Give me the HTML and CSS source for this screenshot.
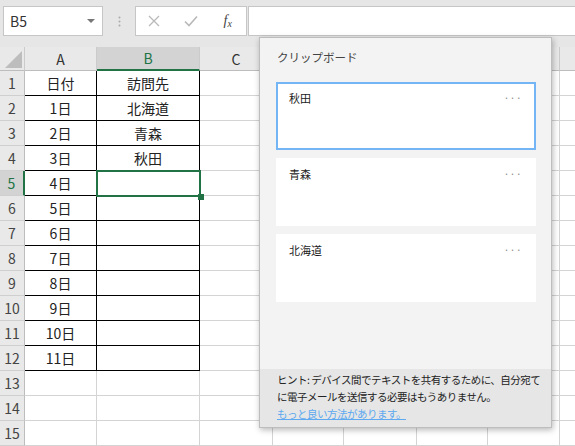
FILE: index.html
```html
<!DOCTYPE html>
<html lang="ja">
<head>
    <meta charset="UTF-8">
    <title>クリップボード</title>
    <link rel="stylesheet" href="styles.css">
</head>
<body>
<div class="app">
    <div class="topbar">
        <div class="namebox">B5<span class="caret"></span></div>
        <div class="grip">
            <svg width="3" height="11" viewBox="0 0 3 11"><circle cx="1.5" cy="1.5" r="1" fill="#aaa"/><circle cx="1.5" cy="5.5" r="1" fill="#aaa"/><circle cx="1.5" cy="9.5" r="1" fill="#aaa"/></svg>
        </div>
        <div class="fxbtns">
            <span class="btn"><svg width="12" height="12" viewBox="0 0 12 12"><path d="M1 1L11 11M11 1L1 11" stroke="#b9b9b9" stroke-width="1.3" fill="none"/></svg></span>
            <span class="btn"><svg width="14" height="12" viewBox="0 0 14 12"><path d="M1 6.5L5 10.5L13 1.5" stroke="#b9b9b9" stroke-width="1.6" fill="none"/></svg></span>
            <span class="btn fx">f<small>x</small></span>
        </div>
        <div class="formula"></div>
    </div>

    <table class="sheet">
        <colgroup>
            <col style="width:25px"><col style="width:72px"><col style="width:103px"><col style="width:73px"><col style="width:71px"><col style="width:73px"><col style="width:71px"><col style="width:72px"><col style="width:72px">
        </colgroup>
        <thead>
            <tr>
                <th class="corner"><svg width="17" height="17" viewBox="0 0 17 17"><polygon points="17,0 17,17 0,17" fill="#bdbdbd"/></svg></th>
                <th>A</th><th class="on">B</th><th>C</th><th></th><th></th><th></th><th></th><th></th>
            </tr>
        </thead>
        <tbody>
            <tr><th>1</th><td class="k">日付</td><td class="k">訪問先</td><td></td><td></td><td></td><td></td><td></td><td></td></tr>
            <tr><th>2</th><td class="k">1日</td><td class="k">北海道</td><td></td><td></td><td></td><td></td><td></td><td></td></tr>
            <tr><th>3</th><td class="k">2日</td><td class="k">青森</td><td></td><td></td><td></td><td></td><td></td><td></td></tr>
            <tr><th>4</th><td class="k">3日</td><td class="k">秋田</td><td></td><td></td><td></td><td></td><td></td><td></td></tr>
            <tr><th class="on">5</th><td class="k">4日</td><td class="k sel"></td><td></td><td></td><td></td><td></td><td></td><td></td></tr>
            <tr><th>6</th><td class="k">5日</td><td class="k"></td><td></td><td></td><td></td><td></td><td></td><td></td></tr>
            <tr><th>7</th><td class="k">6日</td><td class="k"></td><td></td><td></td><td></td><td></td><td></td><td></td></tr>
            <tr><th>8</th><td class="k">7日</td><td class="k"></td><td></td><td></td><td></td><td></td><td></td><td></td></tr>
            <tr><th>9</th><td class="k">8日</td><td class="k"></td><td></td><td></td><td></td><td></td><td></td><td></td></tr>
            <tr><th>10</th><td class="k">9日</td><td class="k"></td><td></td><td></td><td></td><td></td><td></td><td></td></tr>
            <tr><th>11</th><td class="k">10日</td><td class="k"></td><td></td><td></td><td></td><td></td><td></td><td></td></tr>
            <tr><th>12</th><td class="k">11日</td><td class="k"></td><td></td><td></td><td></td><td></td><td></td><td></td></tr>
            <tr><th>13</th><td></td><td></td><td></td><td></td><td></td><td></td><td></td><td></td></tr>
            <tr><th>14</th><td></td><td></td><td></td><td></td><td></td><td></td><td></td><td></td></tr>
            <tr><th>15</th><td></td><td></td><td></td><td></td><td></td><td></td><td></td><td></td></tr>
        </tbody>
    </table>

    <!-- clipboard pane floats over the grid -->
    <aside class="clip">
        <h2>クリップボード</h2>
        <div class="items">
            <div class="card on"><span>秋田</span><span class="more">···</span></div>
            <div class="card"><span>青森</span><span class="more">···</span></div>
            <div class="card"><span>北海道</span><span class="more">···</span></div>
        </div>
        <div class="hint">
            ヒント: デバイス間でテキストを共有するために、自分宛て<br>
            に電子メールを送信する必要はもうありません。<br>
            <a href="#">もっと良い方法があります。</a>
        </div>
    </aside>
</div>
</body>
</html>
```

FILE: styles.css
```css
* {
    box-sizing: border-box;
}
html, body {
    margin: 0;
}
body {
    font-family: "Noto Sans CJK JP", "Noto Sans", sans-serif;
    color: #222;
    background: #fff;
}
.app {
    position: relative;
    width: 575px;
    height: 446px;
    overflow: hidden;
}

/* formula bar */
.topbar {
    display: flex;
    height: 47px;
    padding: 6px 0 11px 3px;
    background: #e6e6e6;
}
.namebox {
    width: 100px;
    display: flex;
    align-items: center;
    justify-content: space-between;
    padding: 0 7px 0 6px;
    background: #fff;
    border: 1px solid #c6c6c6;
    font-size: 14px;
    color: #333;
}
.caret {
    border-left: 4px solid transparent;
    border-right: 4px solid transparent;
    border-top: 4px solid #777;
}
.grip {
    width: 32px;
    display: flex;
    align-items: center;
    justify-content: center;
}
.fxbtns {
    width: 112px;
    display: flex;
    background: #fff;
    border: 1px solid #c6c6c6;
}
.btn {
    flex: 1;
    display: flex;
    align-items: center;
    justify-content: center;
}
.fx {
    font-family: "Liberation Serif", serif;
    font-style: italic;
    font-size: 14px;
    color: #444;
}
.fx small {
    font-size: 10px;
    margin-top: 4px;
}
.formula {
    flex: 1;
    margin-left: 1px;
    background: #fff;
    border: 1px solid #c6c6c6;
    border-right: none;
}

/* grid */
.sheet {
    border-collapse: separate;
    border-spacing: 0;
    table-layout: fixed;
    width: 632px;
    font-size: 14px;
    line-height: 1;
}
.sheet th, .sheet td {
    padding: 0;
    text-align: center;
    white-space: nowrap;
    border-right: 1px solid #d4d4d4;
    border-bottom: 1px solid #d4d4d4;
}
.sheet thead tr {
    height: 24px;
}
.sheet tbody tr {
    height: 25px;
}
.sheet th {
    font-weight: normal;
    background: #e9e9e9;
    color: #333;
}
.sheet thead th {
    border-right-color: #cbcbcb;
    border-bottom-color: #bdbdbd;
}
.sheet tbody th {
    color: #444;
    border-right-color: #bdbdbd;
    border-bottom-color: #cfcfcf;
}
.sheet th.corner {
    text-align: right;
    vertical-align: bottom;
    padding: 0 2px 2px 0;
}
.corner svg {
    display: block;
    margin-left: auto;
}
.sheet thead th.on {
    background: #d3d3d3;
    color: #217346;
    border-bottom: 2px solid #217346;
}
.sheet tbody th.on {
    background: #d3d3d3;
    color: #217346;
    border-right: 2px solid #217346;
}
.sheet td.k {
    border-right-color: #000;
    border-bottom-color: #000;
}
.sheet td.sel {
    position: relative;
}
.sheet td.sel::after {
    content: "";
    position: absolute;
    top: -1px;
    left: -1px;
    right: -2px;
    bottom: -2px;
    border: 2px solid #217346;
}
.sheet td.sel::before {
    content: "";
    position: absolute;
    right: -5px;
    bottom: -5px;
    width: 6px;
    height: 6px;
    background: #217346;
    z-index: 1;
}

/* clipboard pane */
.clip {
    position: absolute;
    left: 259px;
    top: 37px;
    width: 293px;
    height: 391px;
    display: flex;
    flex-direction: column;
    background: #f3f3f3;
    border: 1px solid #bdbdbd;
    box-shadow: 1px 2px 6px rgba(0,0,0,0.28);
}
.clip h2 {
    margin: 0;
    height: 44px;
    padding: 12px 17px 0;
    font-size: 11.5px;
    line-height: 14px;
    font-weight: normal;
    color: #444;
}
.items {
    display: flex;
    flex-direction: column;
    gap: 8px;
    padding: 0 15px 0 16px;
}
.card {
    height: 68px;
    display: flex;
    justify-content: space-between;
    padding: 7px 12px 7px 11px;
    background: #fff;
    border: 2px solid transparent;
    font-size: 11px;
    line-height: 14px;
    color: #1a1a1a;
}
.card.on {
    border-color: #74b5f5;
}
.more {
    color: #888;
    font-size: 10px;
    letter-spacing: 0.5px;
    line-height: 14px;
}
.hint {
    margin-top: auto;
    height: 58px;
    padding: 2px 8px 0 17px;
    background: #e6e6e6;
    font-size: 10.5px;
    line-height: 17px;
    letter-spacing: -0.5px;
    color: #222;
    white-space: nowrap;
}
.hint a {
    color: #5ea9ef;
}
```
